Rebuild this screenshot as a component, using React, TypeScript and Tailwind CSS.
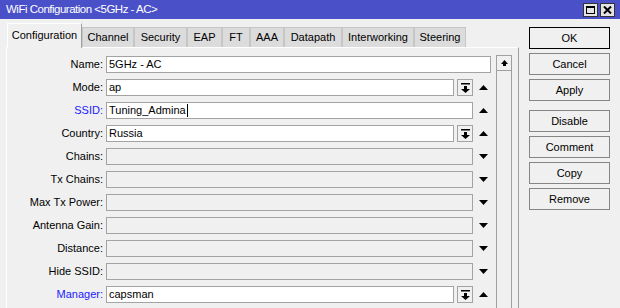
import React from "react";

const Up = () => (
  <svg width="9" height="5" viewBox="0 0 9 5" className="block">
    <polygon points="0,5 9,5 4.5,0" fill="#000" />
  </svg>
);
const Down = () => (
  <svg width="9" height="5" viewBox="0 0 9 5" className="block">
    <polygon points="0,0 9,0 4.5,5" fill="#000" />
  </svg>
);
const DropIcon = () => (
  <svg width="9" height="10" viewBox="0 0 9 10" className="block">
    <rect x="0" y="0" width="9" height="1.5" fill="#000" />
    <rect x="3" y="3" width="3" height="3" fill="#000" />
    <polygon points="0,6 9,6 4.5,10" fill="#000" />
  </svg>
);

type Row = {
  label: string;
  blue?: boolean;
  value?: string;
  kind: "full" | "drop" | "plain" | "disabled";
  cursor?: boolean;
};

const rows: Row[] = [
  { label: "Name:", value: "5GHz - AC", kind: "full" },
  { label: "Mode:", value: "ap", kind: "drop" },
  { label: "SSID:", blue: true, value: "Tuning_Admina", kind: "plain", cursor: true },
  { label: "Country:", value: "Russia", kind: "drop" },
  { label: "Chains:", kind: "disabled" },
  { label: "Tx Chains:", kind: "disabled" },
  { label: "Max Tx Power:", kind: "disabled" },
  { label: "Antenna Gain:", kind: "disabled" },
  { label: "Distance:", kind: "disabled" },
  { label: "Hide SSID:", kind: "disabled" },
  { label: "Manager:", blue: true, value: "capsman", kind: "drop" },
];

const tabs = [
  { t: "Configuration", w: "w-[75px]" },
  { t: "Channel", w: "w-[52px]" },
  { t: "Security", w: "w-[53px]" },
  { t: "EAP", w: "w-[35px]" },
  { t: "FT", w: "w-[28px]" },
  { t: "AAA", w: "w-[34px]" },
  { t: "Datapath", w: "w-[58px]" },
  { t: "Interworking", w: "w-[72px]" },
  { t: "Steering", w: "w-[52px]" },
];

function FormRow({ r }: { r: Row }) {
  const input = (cls: string) => (
    <div
      className={`h-[17px] border border-[#a3a3a3] flex items-center pl-[2px] leading-none ${cls} ${
        r.kind === "disabled" ? "bg-[#f0f0f0]" : "bg-white"
      }`}
    >
      <span>{r.value}</span>
      {r.cursor && <span className="w-px h-[13px] bg-black ml-[1px]" />}
    </div>
  );
  return (
    <div className="flex items-center h-[17px]">
      <div
        className={`w-[96px] shrink-0 text-right leading-none ${
          r.blue ? "text-[#1a1aff]" : "text-black"
        }`}
      >
        {r.label}
      </div>
      <div className="ml-[3px] flex items-center">
        {r.kind === "full" && input("w-[385px]")}
        {r.kind === "drop" && (
          <>
            {input("w-[348px]")}
            <div className="ml-[3px] w-[16px] h-[17px] border border-[#a3a3a3] bg-[#f0f0f0] flex items-center justify-center">
              <DropIcon />
            </div>
          </>
        )}
        {(r.kind === "plain" || r.kind === "disabled") && input("w-[367px]")}
        {r.kind !== "full" && (
          <div className="w-[23px] h-[17px] flex items-center pl-[6px]">
            {r.kind === "disabled" ? <Down /> : <Up />}
          </div>
        )}
      </div>
    </div>
  );
}

export default function App() {
  return (
    <div className="w-[620px] h-[308px] overflow-hidden bg-[#f0f0f0] font-['Liberation_Sans',Arial,sans-serif] text-[11px] text-black">
      {/* title bar */}
      <div className="h-[19px] bg-[#4a50c8] flex items-center pl-[6px] pr-[5px]">
        <span className="text-white text-[11.5px] tracking-[-0.5px] leading-none">
          WiFi Configuration &lt;5GHz - AC&gt;
        </span>
        <div className="ml-auto flex gap-[2px]">
          <div className="w-[15px] h-[14px] bg-[#e4e4e4] border border-[#333] flex items-center justify-center">
            <div className="w-[9px] h-[8px] border border-black border-t-2" />
          </div>
          <div className="w-[15px] h-[14px] bg-[#e4e4e4] border border-[#333] flex items-center justify-center">
            <svg width="9" height="8" viewBox="0 0 9 8" className="block">
              <path d="M1 0.5 L8 7.5 M8 0.5 L1 7.5" stroke="#000" strokeWidth="2" />
            </svg>
          </div>
        </div>
      </div>

      <div className="flex">
        {/* left */}
        <div className="w-[519px] shrink-0">
          <div className="h-[28px] flex items-end pl-[7px]">
            {tabs.map((tb, i) =>
              i === 0 ? (
                <div
                  key={tb.t}
                  className={`${tb.w} h-[25px] bg-[#f0f0f0] border-l border-t border-r border-l-white border-t-white border-r-[#a0a0a0] flex items-center justify-center relative z-10 -mb-px pb-[2px]`}
                >
                  {tb.t}
                </div>
              ) : (
                <div
                  key={tb.t}
                  className={`${tb.w} h-[20px] bg-[#dcdcdc] border-l border-t border-r border-[#c6c6c6] flex items-center justify-center`}
                >
                  {tb.t}
                </div>
              )
            )}
          </div>
          <div className="ml-[6px] h-[300px] border-l border-t border-r border-l-white border-t-white border-r-[#a0a0a0] flex">
            <div className="w-[489px] pt-[8px] flex flex-col gap-[6px]">
              {rows.map((r) => (
                <FormRow key={r.label} r={r} />
              ))}
            </div>
            <div className="w-[16px] mt-[7px] flex flex-col">
              <div className="h-[16px] border border-[#a0a0a0] bg-[#f0f0f0] flex items-center justify-center">
                <svg width="7" height="6" viewBox="0 0 7 6" className="block">
                  <polygon points="0,4 7,4 3.5,0" fill="#000" />
                  <rect x="2" y="4" width="3" height="2" fill="#000" />
                </svg>
              </div>
              <div className="flex-1 border-l border-r border-[#a0a0a0]" />
            </div>
          </div>
        </div>

        {/* right buttons */}
        <div className="ml-[10px] w-[81px] pt-[8px] flex flex-col">
          <div className="h-[22px] border border-black flex items-center justify-center">OK</div>
          <div className="mt-[4px] h-[22px] border border-[#858585] flex items-center justify-center">Cancel</div>
          <div className="mt-[4px] h-[22px] border border-[#858585] flex items-center justify-center">Apply</div>
          <div className="mt-[9px] h-[22px] border border-[#858585] flex items-center justify-center">Disable</div>
          <div className="mt-[4px] h-[22px] border border-[#858585] flex items-center justify-center">Comment</div>
          <div className="mt-[4px] h-[22px] border border-[#858585] flex items-center justify-center">Copy</div>
          <div className="mt-[4px] h-[22px] border border-[#858585] flex items-center justify-center">Remove</div>
        </div>
      </div>
    </div>
  );
}
